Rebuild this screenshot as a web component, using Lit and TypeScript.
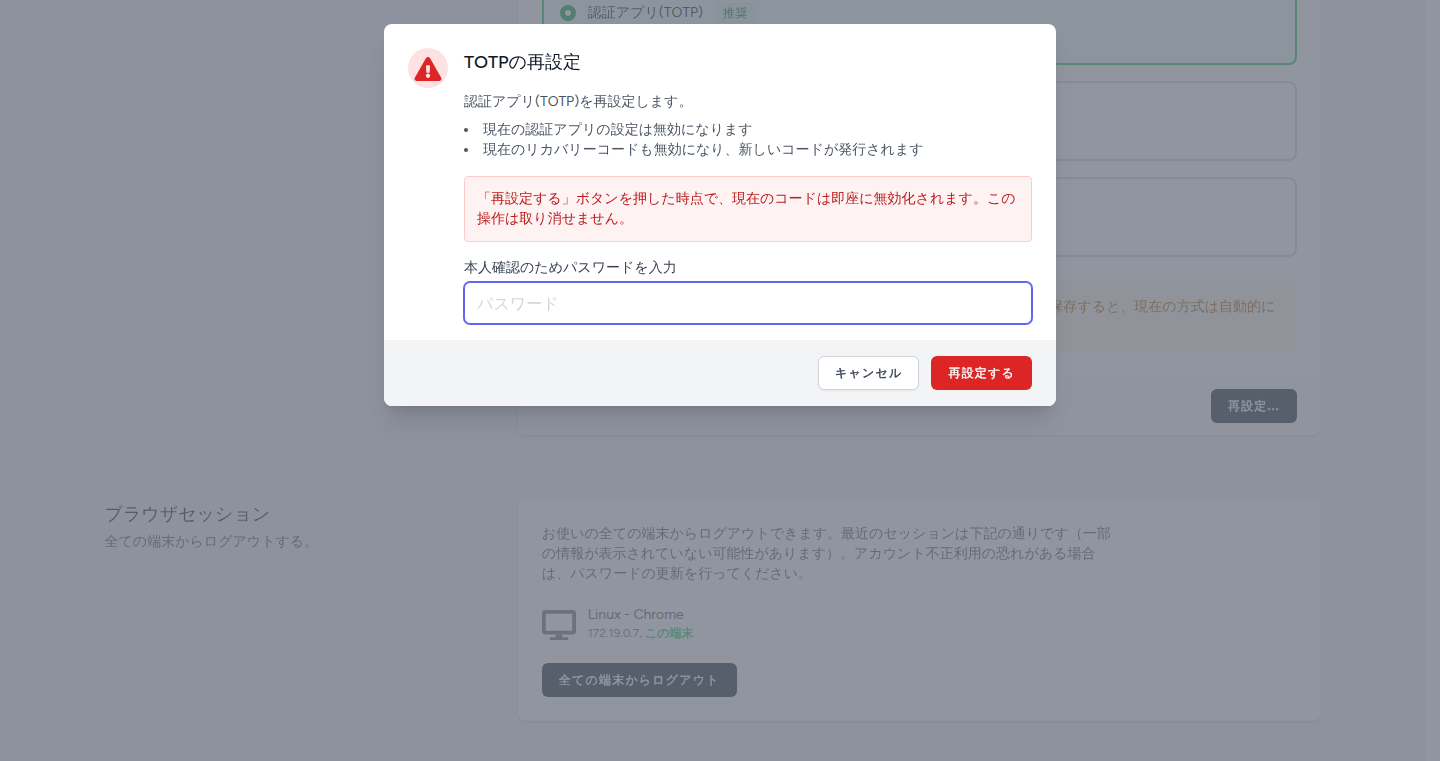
import { LitElement, html, css } from "lit";
import { customElement } from "lit/decorators.js";

@customElement("app-root")
export class AppRoot extends LitElement {
  static styles = css`
    :host {
      display: block;
      height: 100vh;
      overflow: hidden;
      position: relative;
      font-family: Figtree, "WenQuanYi Zen Hei", "Noto Sans CJK JP", sans-serif;
      font-size: 14px;
      line-height: 20px;
      color: #4b5563;
      background: #fff;
    }
    *, *::before, *::after { box-sizing: border-box; }
    h2, h3, p, ul { margin: 0; padding: 0; font-weight: 400; }
    button { font: inherit; cursor: pointer; }

    .page { height: 100%; margin-right: 15px; background: #f3f4f6; }
    .container { max-width: 1280px; margin: 0 auto; padding: 0 32px; }
    .section { display: grid; grid-template-columns: repeat(3, minmax(0, 1fr)); column-gap: 24px; }
    .section + .section { margin-top: 32px; padding-top: 32px; border-top: 1px solid #e5e7eb; }
    .wide { grid-column: 2 / span 2; }
    .section-title { margin-bottom: 4px; font-size: 18px; line-height: 28px; color: #111827; }
    .card { background: #fff; border-radius: 8px; box-shadow: 0 1px 3px rgba(0, 0, 0, 0.1), 0 1px 2px rgba(0, 0, 0, 0.06); }
    .card.upper { border-radius: 0 0 8px 8px; }
    .options { display: grid; gap: 16px; padding: 0 24px 24px; }
    .option { height: 80px; border: 2px solid #d1d5db; border-radius: 8px; }
    .option.selected { height: 65px; padding: 3px 16px 16px; border-color: #22c55e; border-top: 0; border-radius: 0 0 8px 8px; background: #f0fdf4; }
    .choice { display: flex; align-items: center; gap: 12px; color: #111827; }
    .choice input { appearance: none; width: 16px; height: 16px; margin: 0; border: 5px solid #16a34a; border-radius: 50%; background: #fff; }
    .badge { padding: 2px 8px; border-radius: 4px; background: #dcfce7; color: #166534; font-size: 12px; line-height: 16px; }
    .notice { margin-top: 8px; padding: 16px; border-radius: 6px; background: #fef8e6; color: #aa5e08; }
    .card-footer { display: flex; justify-content: flex-end; padding: 12px 24px; background: #f9fafb; border-radius: 0 0 8px 8px; }

    .btn { padding: 8px 16px; border: 1px solid transparent; border-radius: 6px; font-size: 12px; line-height: 16px; font-weight: 600; letter-spacing: 0.1em; color: #fff; }
    .btn, .address strong { -webkit-text-stroke: 0.03em currentColor; }
    .dark { background: #1f2937; }
    .danger { background: #dc2626; }
    .light { background: #fff; border-color: #d1d5db; color: #374151; box-shadow: 0 1px 2px rgba(0, 0, 0, 0.05); }

    .sessions { padding: 24px; }
    .sessions p { max-width: 576px; }
    .device { display: flex; align-items: flex-end; gap: 12px; margin: 20px 0; padding: 1px 0 2px; }
    .device svg { width: 34px; height: 32px; fill: #6b7280; }
    .agent { line-height: 20px; }
    .address { font-size: 12px; line-height: 16px; color: #6b7280; }
    .address strong { color: #22c55e; font-weight: 600; }

    .overlay { position: absolute; inset: 0; padding: 24px; background: rgba(107, 114, 128, 0.75); }
    .modal { max-width: 672px; margin: 0 auto; border-radius: 8px; overflow: hidden; background: #fff; box-shadow: 0 20px 25px -5px rgba(0, 0, 0, 0.1), 0 8px 10px -6px rgba(0, 0, 0, 0.1); }
    .modal-main { display: flex; gap: 16px; padding: 24px 24px 16px; }
    .alert-icon { display: flex; align-items: center; justify-content: center; flex: none; width: 40px; height: 40px; padding-top: 2px; border-radius: 50%; background: #fee2e2; }
    .alert-icon svg { width: 28px; height: 24px; }
    .modal-body { flex: 1; min-width: 0; }
    .modal-title { font-size: 18px; line-height: 28px; font-weight: 500; color: #111827; margin-bottom: 16px; }
    .modal-body ul { margin-top: 8px; list-style: disc inside; }
    .warning { margin: 16px 0; padding: 12px; border: 1px solid #fecaca; border-radius: 4px; background: #fef2f2; color: #b91c1c; }
    .field { display: block; color: #374151; margin-bottom: 4px; }
    .password { display: block; width: 100%; height: 42px; padding: 8px 12px; border: 1px solid #6366f1; border-radius: 6px; box-shadow: 0 0 0 1px #6366f1; outline: none; font: inherit; font-size: 16px; line-height: 24px; background: #fff; }
    .password::placeholder { color: #d1d5db; opacity: 1; }
    .modal-footer { display: flex; justify-content: flex-end; gap: 12px; padding: 16px 24px; background: #f3f4f6; }
  `;

  render() {
    return html`
      <main class="page">
        <div class="container">
          <section class="section">
            <div class="card upper wide">
              <div class="options">
                <div class="option selected">
                  <label class="choice">
                    <input type="radio" name="method" checked />
                    <span>認証アプリ(TOTP)</span>
                    <span class="badge">推奨</span>
                  </label>
                </div>
                <div class="option"></div>
                <div class="option"></div>
                <p class="notice">2FA認証方式は同時に一つだけ利用できます。別の方式を選択して設定内容を保存すると、現在の方式は自動的に<br />無効になります。</p>
              </div>
              <div class="card-footer"><button class="btn dark" type="button">再設定...</button></div>
            </div>
          </section>
          <section class="section">
            <div>
              <h2 class="section-title">ブラウザセッション</h2>
              <p>全ての端末からログアウトする。</p>
            </div>
            <div class="card sessions wide">
              <p>お使いの全ての端末からログアウトできます。最近のセッションは下記の通りです（一部の情報が表示されていない可能性があります）。アカウント不正利用の恐れがある場合は、パスワードの更新を行ってください。</p>
              <div class="device">
                <svg viewBox="0 0 576 512" aria-hidden="true">
                  <path d="M528 0H48C21.500 0 0 21.500 0 48v320c0 26.500 21.500 48 48 48h192l-16 48h-72c-13.300 0-24 10.700-24 24s10.700 24 24 24h272c13.300 0 24-10.700 24-24s-10.700-24-24-24h-72l-16-48h192c26.500 0 48-21.500 48-48V48c0-26.500-21.500-48-48-48zm-16 352H64V64h448v288z" />
                </svg>
                <div>
                  <div class="agent">Linux - Chrome</div>
                  <div class="address">172.19.0.7, <strong>この端末</strong></div>
                </div>
              </div>
              <button class="btn dark" type="button">全ての端末からログアウト</button>
            </div>
          </section>
        </div>
      </main>
      <div class="overlay">
        <div class="modal" role="dialog" aria-modal="true" aria-labelledby="title">
          <div class="modal-main">
            <div class="alert-icon">
              <svg viewBox="0 0 576 512" aria-hidden="true">
                <path fill="#dc2626" d="M569.517 440.013C587.975 472.007 564.806 512 527.940 512H48.054c-36.937 0-59.999-40.055-41.577-71.987L246.423 23.985c18.467-32.009 64.720-31.951 83.154 0l239.940 416.028zM288 354c-25.405 0-46 20.595-46 46s20.595 46 46 46 46-20.595 46-46-20.595-46-46-46zm-43.673-165.346l7.418 136c.347 6.364 5.609 11.346 11.982 11.346h48.546c6.373 0 11.635-4.982 11.982-11.346l7.418-136c.375-6.874-5.098-12.654-11.982-12.654h-63.383c-6.884 0-12.356 5.780-11.981 12.654z" />
              </svg>
            </div>
            <div class="modal-body">
              <h3 class="modal-title" id="title">TOTPの再設定</h3>
              <p>認証アプリ(TOTP)を再設定します。</p>
              <ul>
                <li>現在の認証アプリの設定は無効になります</li>
                <li>現在のリカバリーコードも無効になり、新しいコードが発行されます</li>
              </ul>
              <p class="warning">「再設定する」ボタンを押した時点で、現在のコードは即座に無効化されます。この操作は取り消せません。</p>
              <label class="field" for="password">本人確認のためパスワードを入力</label>
              <input class="password" id="password" type="password" placeholder="パスワード" />
            </div>
          </div>
          <div class="modal-footer">
            <button class="btn light" type="button">キャンセル</button>
            <button class="btn danger" type="button">再設定する</button>
          </div>
        </div>
      </div>
    `;
  }
}
